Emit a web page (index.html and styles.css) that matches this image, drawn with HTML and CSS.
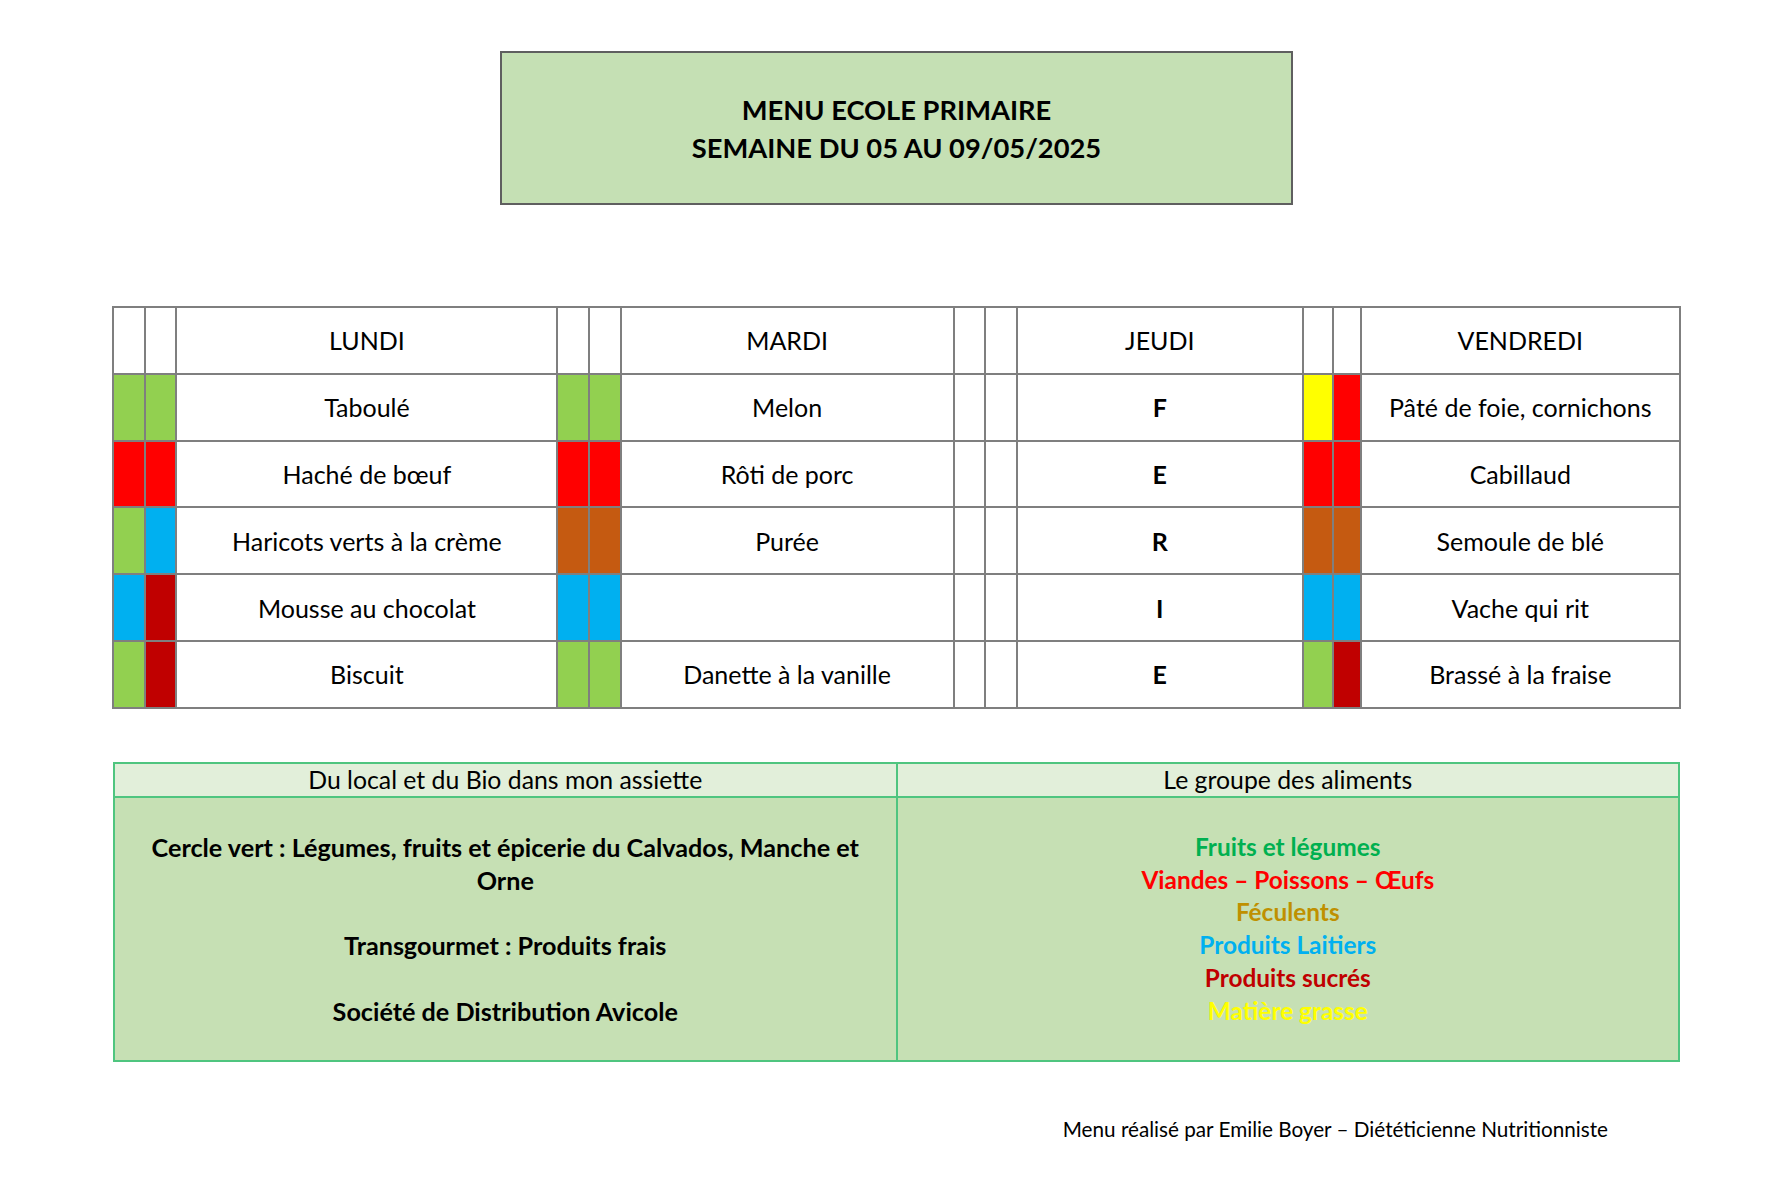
FILE: index.html
```html
<!DOCTYPE html>
<html lang="fr">
<head>
<meta charset="utf-8">
<title>Menu école primaire</title>
<link rel="stylesheet" href="styles.css">
</head>
<body>
<div class="page">
  <header class="title-box">
    <div>MENU ECOLE PRIMAIRE</div>
    <div>SEMAINE DU 05 AU 09/05/2025</div>
  </header>

  <table class="menu">
    <colgroup>
      <col class="c-sw"><col class="c-sw"><col class="c-lundi">
      <col class="c-sw"><col class="c-sw"><col class="c-mardi">
      <col class="c-sw"><col class="c-sw"><col class="c-jeudi">
      <col class="c-sw2"><col class="c-sw3"><col class="c-vendredi">
    </colgroup>
    <tr>
      <td></td><td></td><td>LUNDI</td>
      <td></td><td></td><td>MARDI</td>
      <td></td><td></td><td>JEUDI</td>
      <td></td><td></td><td>VENDREDI</td>
    </tr>
    <tr>
      <td class="g"></td><td class="g"></td><td>Taboulé</td>
      <td class="g"></td><td class="g"></td><td>Melon</td>
      <td></td><td></td><td class="ferie">F</td>
      <td class="y"></td><td class="r"></td><td>Pâté de foie, cornichons</td>
    </tr>
    <tr>
      <td class="r"></td><td class="r"></td><td>Haché de bœuf</td>
      <td class="r"></td><td class="r"></td><td>Rôti de porc</td>
      <td></td><td></td><td class="ferie">E</td>
      <td class="r"></td><td class="r"></td><td>Cabillaud</td>
    </tr>
    <tr>
      <td class="g"></td><td class="b"></td><td>Haricots verts à la crème</td>
      <td class="br"></td><td class="br"></td><td>Purée</td>
      <td></td><td></td><td class="ferie">R</td>
      <td class="br"></td><td class="br"></td><td>Semoule de blé</td>
    </tr>
    <tr>
      <td class="b"></td><td class="dr"></td><td>Mousse au chocolat</td>
      <td class="b"></td><td class="b"></td><td></td>
      <td></td><td></td><td class="ferie">I</td>
      <td class="b"></td><td class="b"></td><td>Vache qui rit</td>
    </tr>
    <tr>
      <td class="g"></td><td class="dr"></td><td>Biscuit</td>
      <td class="g"></td><td class="g"></td><td>Danette à la vanille</td>
      <td></td><td></td><td class="ferie">E</td>
      <td class="g"></td><td class="dr"></td><td>Brassé à la fraise</td>
    </tr>
  </table>

  <table class="info">
    <tr>
      <th>Du local et du Bio dans mon assiette</th>
      <th>Le groupe des aliments</th>
    </tr>
    <tr>
      <td class="suppliers">
        <p>Cercle vert : Légumes, fruits et épicerie du Calvados, Manche et<br>Orne</p>
        <p>Transgourmet : Produits frais</p>
        <p>Société de Distribution Avicole</p>
      </td>
      <td class="groups">
        <div class="t-green">Fruits et légumes</div>
        <div class="t-red">Viandes – Poissons – Œufs</div>
        <div class="t-gold">Féculents</div>
        <div class="t-blue">Produits Laitiers</div>
        <div class="t-dred">Produits sucrés</div>
        <div class="t-yellow">Matière grasse</div>
      </td>
    </tr>
  </table>

  <footer class="credit">Menu réalisé par Emilie Boyer – Diététicienne Nutritionniste</footer>
</div>
</body>
</html>
```

FILE: styles.css
```css
* { box-sizing: border-box; }

html, body {
  margin: 0;
  padding: 0;
  background: #ffffff;
}

body {
  font-family: "Lato", "Open Sans", sans-serif;
  color: #000000;
}

.page {
  width: 1771px;
  padding: 51px 91px 0 113px;
  display: flex;
  flex-direction: column;
  align-items: center;
}

.title-box {
  width: 793px;
  height: 154px;
  background: #c5e0b4;
  border: 2px solid #5f5f5f;
  display: flex;
  flex-direction: column;
  justify-content: center;
  align-items: center;
  font-weight: 700;
  font-size: 27.3px;
  line-height: 38px;
  padding-top: 2px;
}

.menu {
  margin-top: 101px;
  width: 1567px;
  border-collapse: collapse;
  table-layout: fixed;
  font-size: 25px;
}

.c-sw { width: 31.6px; }
.c-sw2 { width: 30px; }
.c-sw3 { width: 28px; }
.c-lundi { width: 381px; }
.c-mardi { width: 333px; }
.c-jeudi { width: 286px; }
.c-vendredi { width: 319px; }

.menu td {
  height: 66.8px;
  border: 2px solid #7f7f7f;
  text-align: center;
  vertical-align: middle;
  padding: 0 4px;
  white-space: nowrap;
}

.menu td.ferie { font-weight: 700; }

.menu td.g { background: #92d050; }
.menu td.r { background: #ff0000; }
.menu td.b { background: #00b0f0; }
.menu td.dr { background: #c00000; }
.menu td.br { background: #c55a11; }
.menu td.y { background: #ffff00; }

.info {
  margin-top: 53px;
  width: 1567px;
  border-collapse: collapse;
  table-layout: fixed;
}

.info th,
.info td {
  border: 2px solid #4fc57f;
  text-align: center;
  width: 50%;
}

.info th {
  background: #e2efda;
  font-weight: 400;
  font-size: 24.8px;
  height: 34px;
  line-height: 30px;
  padding: 0;
}

.info td {
  background: #c6e0b4;
  vertical-align: top;
  font-weight: 700;
  line-height: 32.75px;
  padding: 33px 16px 33px;
}

.info td.suppliers { font-size: 25.2px; }
.info td.groups { font-size: 24.4px; }

.info td p {
  margin: 0 0 32.75px;
}

.info td p:last-child { margin-bottom: 0; }

.t-green { color: #00b050; }
.t-red { color: #ff0000; }
.t-gold { color: #bf9000; }
.t-blue { color: #00b0f0; }
.t-dred { color: #c00000; }
.t-yellow { color: #ffff00; }

.credit {
  align-self: flex-end;
  margin-top: 55px;
  margin-right: 72px;
  font-size: 20.7px;
  line-height: 24px;
}
```
